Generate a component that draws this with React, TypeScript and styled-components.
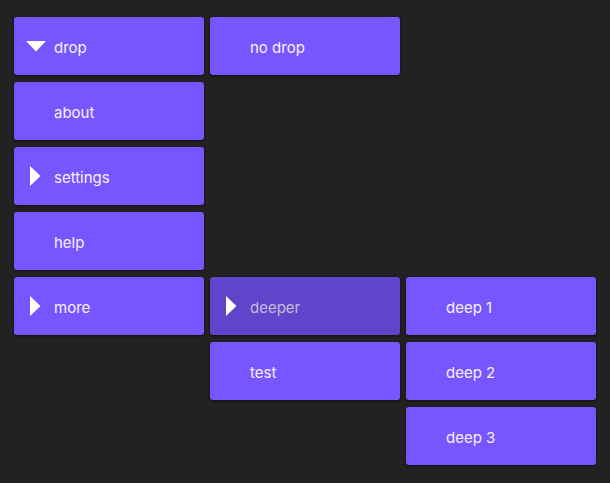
import React from 'react';
import styled, { createGlobalStyle } from 'styled-components';

const GlobalStyle = createGlobalStyle`
  html, body {
    margin: 0;
    padding: 0;
    background: #222222;
  }
  body {
    font-family: Inter, "Noto Sans", "Liberation Sans", sans-serif;
  }
`;

const Root = styled.div`
  min-height: 483px;
  padding: 17px 14px;
  box-sizing: border-box;
`;

const MenuGrid = styled.div`
  display: grid;
  grid-template-columns: repeat(3, 190px);
  grid-auto-rows: 58px;
  column-gap: 6px;
  row-gap: 7px;
`;

const Item = styled.button<{ $col: number; $row: number; $active?: boolean }>`
  grid-column: ${(p) => p.$col};
  grid-row: ${(p) => p.$row};
  display: flex;
  align-items: center;
  padding: 0 0 0 12px;
  border: none;
  border-radius: 3px;
  background: ${(p) => (p.$active ? '#5f45c9' : '#7856ff')};
  color: ${(p) => (p.$active ? '#c4bddf' : '#f4f2ff')};
  box-shadow: 0 1px 3px rgba(0, 0, 0, 0.55);
  font-family: inherit;
  font-size: 15px;
  text-align: left;
  cursor: pointer;
`;

const IconSlot = styled.span`
  width: 28px;
  height: 20px;
  display: flex;
  align-items: center;
  flex-shrink: 0;
`;

const Label = styled.span`
  line-height: 1;
  padding-top: 2px;
`;

type Arrow = 'down' | 'right' | undefined;

const ArrowIcon: React.FC<{ dir: Arrow }> = ({ dir }) => {
  if (dir === 'down') {
    return (
      <svg width="20" height="11" viewBox="0 0 20 11">
        <polygon points="0,0 20,0 10,10.5" fill="#ffffff" />
      </svg>
    );
  }
  if (dir === 'right') {
    return (
      <svg width="20" height="20" viewBox="0 0 20 20" style={{ marginLeft: 4 }}>
        <polygon points="0,0 10.5,10 0,20" fill="#ffffff" />
      </svg>
    );
  }
  return null;
};

interface MenuEntry {
  label: string;
  col: number;
  row: number;
  arrow?: Arrow;
  active?: boolean;
}

const entries: MenuEntry[] = [
  { label: 'drop', col: 1, row: 1, arrow: 'down' },
  { label: 'no drop', col: 2, row: 1 },
  { label: 'about', col: 1, row: 2 },
  { label: 'settings', col: 1, row: 3, arrow: 'right' },
  { label: 'help', col: 1, row: 4 },
  { label: 'more', col: 1, row: 5, arrow: 'right' },
  { label: 'deeper', col: 2, row: 5, arrow: 'right', active: true },
  { label: 'test', col: 2, row: 6 },
  { label: 'deep 1', col: 3, row: 5 },
  { label: 'deep 2', col: 3, row: 6 },
  { label: 'deep 3', col: 3, row: 7 },
];

const App: React.FC = () => {
  return (
    <Root>
      <GlobalStyle />
      <MenuGrid>
        {entries.map((e) => (
          <Item key={e.label} $col={e.col} $row={e.row} $active={e.active}>
            <IconSlot>
              <ArrowIcon dir={e.arrow} />
            </IconSlot>
            <Label>{e.label}</Label>
          </Item>
        ))}
      </MenuGrid>
    </Root>
  );
};

export default App;
